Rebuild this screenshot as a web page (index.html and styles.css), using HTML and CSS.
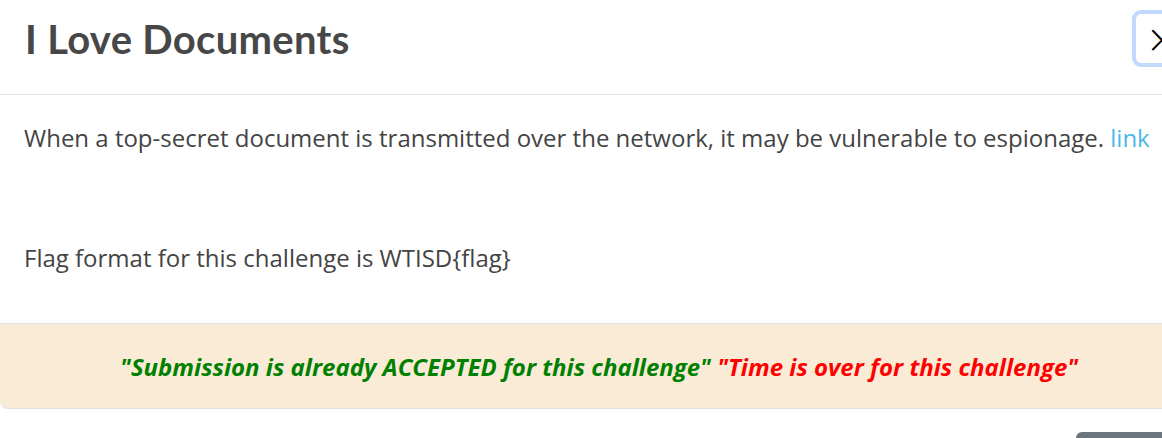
FILE: index.html
```html
<!DOCTYPE html>
<html>
<head>
<meta charset="utf-8">
<link rel="stylesheet" href="styles.css">
</head>
<body>
<div class="modal">
  <div class="modal-header">
    <h1 class="title">I Love Documents</h1>
    <button class="close" type="button">&times;</button>
  </div>
  <div class="modal-body">
    <p class="para">When a top-secret document is transmitted over the network, it may be vulnerable to espionage. <a class="link" href="#">link</a></p>
    <p class="para flag">Flag format for this challenge is WTISD{flag}</p>
  </div>
  <div class="alert">
    <p class="alert-text"><span class="ok">"Submission is already ACCEPTED for this challenge"</span> <span class="over">"Time is over for this challenge"</span></p>
  </div>
  <div class="footer">
    <button class="btn" type="button">Close</button>
  </div>
</div>
</body>
</html>
```

FILE: styles.css
```css
html, body {
  margin: 0;
  padding: 0;
  background: #fff;
  overflow: hidden;
}
.modal {
  width: 1162px;
  height: 438px;
  overflow: hidden;
  font-family: "Open Sans", sans-serif;
}
.modal-header {
  display: flex;
  align-items: flex-start;
  justify-content: space-between;
  height: 95px;
  border-bottom: 1px solid #e4e4ea;
  box-sizing: border-box;
}
.title {
  margin: 0;
  padding: 15px 0 0 25px;
  font-family: "Lato", sans-serif;
  font-weight: 700;
  font-size: 40px;
  line-height: 48px;
  letter-spacing: 0.3px;
  color: #474747;
}
.close {
  margin: 10px -30px 0 0;
  width: 60px;
  height: 57px;
  box-sizing: border-box;
  border: 4px solid #c1d9fc;
  border-radius: 9px;
  background: #fff;
  font-size: 40px;
  font-weight: 300;
  line-height: 40px;
  color: #000;
  padding: 0;
  font-family: "DejaVu Sans", sans-serif;
}
.modal-body {
  padding: 25px 25px 0 24px;
  height: 228px;
  box-sizing: border-box;
}
.para {
  margin: 0;
  font-size: 24px;
  line-height: 36px;
  color: #444;
  white-space: nowrap;
}
.flag {
  margin-top: 84px;
}
.link {
  color: #4cb8e8;
  text-decoration: none;
}
.alert {
  height: 86px;
  box-sizing: border-box;
  background: #faebd7;
  border-top: 1px solid #e0e0e4;
  border-bottom: 1px solid #e0e0e4;
  border-bottom-left-radius: 8px;
  display: flex;
  align-items: center;
  padding-left: 120px;
}
.alert-text {
  margin: 0;
  font-size: 24px;
  font-weight: 700;
  font-style: italic;
  white-space: nowrap;
}
.ok { color: #008000; }
.over { color: #ff0000; }
.footer {
  display: flex;
  justify-content: flex-end;
  padding-top: 23px;
}
.btn {
  width: 86px;
  height: 48px;
  padding-top: 14px;
  background: #6c757d;
  border: none;
  border-radius: 6px 0 0 0;
  color: #fff;
  font-size: 16px;
}
```
